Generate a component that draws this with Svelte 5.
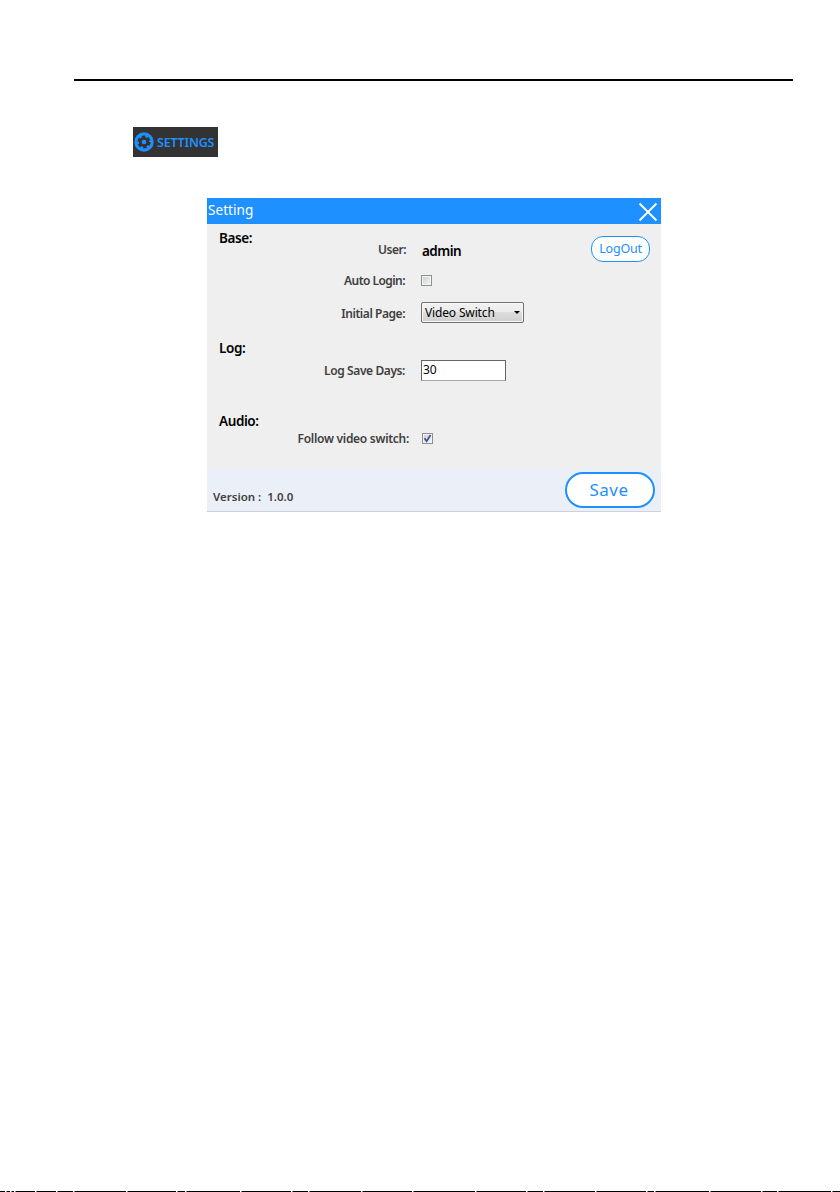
<script>
    let autoLogin = false;
    let followVideo = true;
    let initialPage = 'Video Switch';
    let logDays = '30';

    // breaks in the line along the bottom edge of the page
    const gaps = [5, 10, 14, 35, 56, 73, 126, 176, 185, 240, 291, 308, 361, 412, 475, 526, 543, 595, 646, 654, 709, 761, 777, 831];
</script>

<div class="page">
    <div class="rule"></div>

    <div class="settings-tab">
        <svg width="20" height="20" viewBox="0 0 20 20">
            <circle cx="10" cy="10" r="9.7" fill="#1e90ff" />
            <circle cx="10" cy="10" r="5.1" fill="#333" />
            <circle cx="10" cy="10" r="5.4" fill="none" stroke="#333" stroke-width="2.4" stroke-dasharray="3.4 2.255" />
            <circle cx="10" cy="10" r="2.3" fill="#1e90ff" />
        </svg>
        <span>SETTINGS</span>
    </div>

    <div class="dialog">
        <header>
            <span class="title">Setting</span>
            <svg class="close" width="20" height="20" viewBox="0 0 20 20">
                <path d="M1.5 1.5L18.5 18.5M18.5 1.5L1.5 18.5" stroke="#fff" stroke-width="1.8" />
            </svg>
        </header>

        <section class="base">
            <h2>Base:</h2>
            <div class="rows">
                <div class="row user">
                    <span class="label l-user">User:</span>
                    <strong>admin</strong>
                    <button class="logout">LogOut</button>
                </div>
                <div class="row auto">
                    <span class="label">Auto Login:</span>
                    <span class="check" class:checked={autoLogin}></span>
                </div>
                <div class="row initial">
                    <span class="label l-initial">Initial Page:</span>
                    <div class="select">
                        <span>{initialPage}</span>
                        <svg width="6" height="3" viewBox="0 0 6 3"><path d="M0 0H6L3 3Z" /></svg>
                    </div>
                </div>
            </div>
        </section>

        <section class="log">
            <h2>Log:</h2>
            <div class="rows">
                <div class="row">
                    <span class="label l-days">Log Save Days:</span>
                    <div class="input">{logDays}</div>
                </div>
            </div>
        </section>

        <section class="audio">
            <h2>Audio:</h2>
            <div class="rows">
                <div class="row">
                    <span class="label l-follow">Follow video switch:</span>
                    <span class="check">
                        {#if followVideo}
                            <svg width="9" height="9" viewBox="0 0 9 9"><path d="M1.5 4.2L3.6 7.2L7.6 1" /></svg>
                        {/if}
                    </span>
                </div>
            </div>
        </section>

        <footer>
            <div class="version"><span>Version :</span><span class="num">1.0.0</span></div>
            <button class="save">Save</button>
        </footer>
    </div>

    <svg class="page-end" width="840" height="1" viewBox="0 0 840 1">
        <rect width="840" height="1" />
        {#each gaps as x}
            <rect {x} width="1.5" height="1" fill="#fff" />
        {/each}
    </svg>
</div>

<style>
    :global(body) {
        background: #fff;
    }

    .page {
        box-sizing: border-box;
        width: 840px;
        height: 1192px;
        padding-top: 79px;
        display: flex;
        flex-direction: column;
        overflow: hidden;
        font-family: "Noto Sans", "Open Sans", sans-serif;
        white-space: nowrap;
    }

    .rule {
        height: 2px;
        flex: none;
        margin: 0 47px 0 74px;
        background: #000;
    }

    .settings-tab {
        display: flex;
        align-items: center;
        width: 85px;
        height: 30px;
        flex: none;
        box-sizing: border-box;
        padding-left: 1px;
        margin: 46px 0 0 133px;
        background: #333;
        color: #1e90ff;
        font-size: 12.5px;
        font-weight: 600;
    }

    .settings-tab span {
        margin: 1px 0 0 3px;
        letter-spacing: -0.2px;
    }

    .dialog {
        width: 454px;
        height: 314px;
        flex: none;
        margin: 41px 0 0 207px;
        background: #efefef;
        color: #000;
    }

    header {
        display: flex;
        align-items: center;
        justify-content: space-between;
        height: 26px;
        padding: 0 3px 0 1px;
        background: #1e90ff;
        color: #fff;
    }

    .title {
        margin-top: -1px;
        font-size: 13.5px;
        line-height: 25px;
        letter-spacing: 0.05px;
    }

    .close {
        margin-top: 2px;
    }

    section {
        display: flex;
        box-sizing: border-box;
        padding-left: 12px;
    }

    h2 {
        width: 70px;
        margin: 0;
        font-size: 13.5px;
        line-height: 18px;
        font-weight: 600;
        letter-spacing: -0.4px;
    }

    .rows {
        flex: 1;
    }

    .row {
        display: flex;
        align-items: center;
    }

    .label {
        width: 116px;
        margin-right: 16px;
        text-align: right;
        color: #404040;
        font-size: 12px;
        line-height: 16px;
        font-weight: 600;
        letter-spacing: -0.55px;
    }

    .label.l-user {
        width: 117px;
        margin-right: 15px;
        padding-top: 2px;
        letter-spacing: -0.5px;
    }

    .label.l-initial {
        padding-top: 4px;
        letter-spacing: -0.45px;
    }

    .label.l-days {
        padding-top: 1px;
        letter-spacing: -0.4px;
    }

    .label.l-follow {
        width: 120px;
        margin-right: 13px;
        padding-top: 1px;
        letter-spacing: -0.28px;
    }

    .base {
        height: 110px;
    }

    .base h2 {
        padding-top: 5px;
    }

    .base .rows {
        padding-top: 9px;
    }

    .user {
        height: 32px;
    }

    .auto {
        height: 31px;
    }

    .initial {
        height: 32px;
    }

    strong {
        margin: 3px 0 0 1px;
        font-size: 13.5px;
        line-height: 18px;
        font-weight: 600;
        letter-spacing: -0.55px;
    }

    button {
        box-sizing: border-box;
        padding: 0;
        background: #fff;
        color: #1e90ff;
        font-family: inherit;
    }

    .logout {
        width: 59px;
        height: 26px;
        margin: 0 11px 0 auto;
        border: 1.5px solid #1e90ff;
        border-radius: 12px;
        font-size: 12.5px;
        line-height: 20px;
        letter-spacing: -0.2px;
    }

    .check {
        display: flex;
        align-items: center;
        justify-content: center;
        box-sizing: border-box;
        width: 11px;
        height: 11px;
        border: 1px solid #8e8f8f;
        background: linear-gradient(135deg, #c9cdd1, #f6f6f6);
        box-shadow: inset 0 0 0 1px #f4f4f4;
    }

    .check path {
        fill: none;
        stroke: #3f5598;
        stroke-width: 1.8;
    }

    .select {
        display: flex;
        align-items: center;
        justify-content: space-between;
        box-sizing: border-box;
        width: 103px;
        height: 21px;
        padding: 0 3px 0 3px;
        border: 1px solid #707070;
        border-radius: 2px;
        background: linear-gradient(#f2f2f2, #ebebeb 50%, #dddddd 50%, #cfcfcf);
        box-shadow: inset 0 0 0 1px #f8f8f8;
        font-size: 12px;
        line-height: 18px;
        letter-spacing: -0.15px;
    }

    .select span {
        margin-top: 1px;
    }

    .input {
        box-sizing: border-box;
        width: 85px;
        height: 21px;
        padding-left: 1px;
        border: 1px solid #646464;
        border-bottom-color: #a8a8a8;
        background: #fff;
        font-size: 12px;
        line-height: 17px;
    }

    .log {
        height: 73px;
        padding-top: 5px;
    }

    .log .rows {
        padding-top: 21px;
    }

    .audio {
        height: 61px;
        padding-top: 5px;
    }

    .audio .rows {
        padding-top: 18px;
    }

    footer {
        display: flex;
        justify-content: space-between;
        box-sizing: border-box;
        height: 44px;
        padding: 4px 6px 0 6px;
        border-bottom: 1px solid #cdd1df;
        background: #ebeff8;
    }

    .version {
        margin-top: 17px;
        color: #404040;
        font-size: 11.5px;
        line-height: 16px;
        font-weight: 600;
    }

    .num {
        margin-left: 6px;
    }

    .save {
        width: 90px;
        height: 36px;
        padding-right: 2px;
        border: 2px solid #1e90ff;
        border-radius: 18px;
        font-size: 17px;
        line-height: 30px;
        letter-spacing: 0.5px;
    }

    .page-end {
        display: block;
        flex: none;
        margin-top: auto;
    }
</style>
